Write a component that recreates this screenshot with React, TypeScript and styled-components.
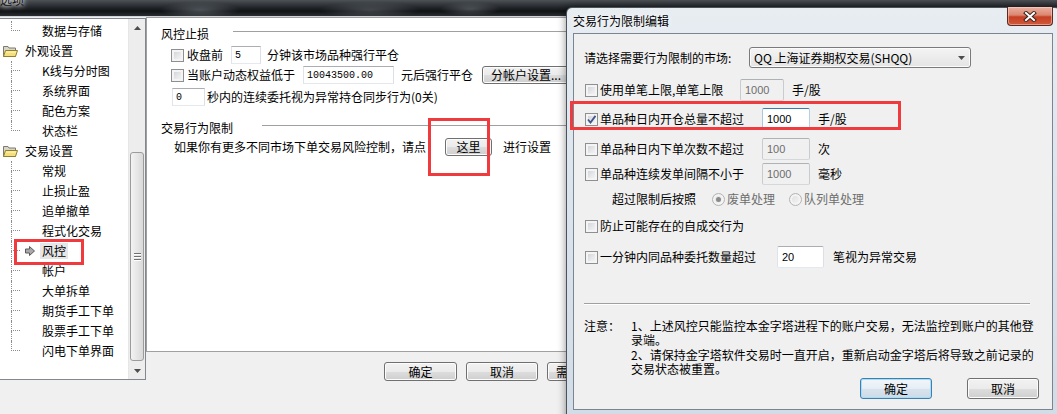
import * as React from "react";
import styled, { createGlobalStyle } from "styled-components";

const cjk = `"Noto Sans CJK SC", "Noto Sans", sans-serif`;
const mono = `"Liberation Mono", "DejaVu Sans Mono", monospace`;
const sans = `"Liberation Sans", "DejaVu Sans", sans-serif`;

const GlobalStyle = createGlobalStyle`
    html, body {
        margin: 0;
        padding: 0;
        background: #f0f0f0;
    }
    body {
        font-family: ${cjk};
    }
    * {
        box-sizing: border-box;
    }
`;

const Root = styled.div`
    position: relative;

    width: 1057px;
    height: 414px;
    overflow: hidden;

    background: #f0f0f0;
    color: #000;
    font: 12px/16px ${cjk};
`;

/* ---------- background window ---------- */

const MainWindow = styled.div`
    display: flex;
    flex-direction: column;
`;

const TitleBar = styled.div`
    display: flex;
    align-items: flex-start;

    height: 17px;
    overflow: hidden;

    border-bottom: 1px solid #cfd4d9;
    background: radial-gradient(ellipse 40px 8px at 200px 10px, rgba(140, 150, 160, 0.45), transparent),
        radial-gradient(ellipse 50px 8px at 370px 10px, rgba(150, 160, 170, 0.35), transparent),
        radial-gradient(ellipse 30px 7px at 470px 9px, rgba(160, 170, 180, 0.35), transparent),
        linear-gradient(180deg, #4d5257 0%, #24272b 45%, #101214 70%, #2b2f33 100%);
`;

const WinTitle = styled.span`
    margin-top: -7px;
    font-size: 12px;
    line-height: 14px;
    color: #111;
    text-shadow: 0 0 4px #fff, 0 0 6px #fff;
`;

const Body = styled.div`
    display: flex;
    height: 364px;
`;

const TreePanel = styled.div`
    display: flex;

    width: 146px;
    height: 362px;
    margin-top: 1px;

    border: 1px solid #828790;
    border-left: none;
    background: #fff;
`;

const TreeList = styled.div`
    flex: 1;
    padding-top: 2px;
`;

const TreeRow = styled.div`
    display: flex;
    align-items: center;

    height: 20px;
    white-space: nowrap;
`;

const Connector = styled.div`
    display: flex;
    flex-direction: column;
    align-self: stretch;

    width: 9px;
    margin-left: 11px;
`;

const ConnTop = styled.div`
    height: 10px;
    border-left: 1px dotted #8c8c8c;
    border-bottom: 1px dotted #8c8c8c;
`;

const ConnBottom = styled.div<{ $last?: boolean }>`
    flex: 1;
    border-left: ${p => (p.$last ? "none" : "1px dotted #8c8c8c")};
`;

const IconSlot = styled.span`
    display: flex;
    align-items: center;

    width: 20px;
    padding-left: 5px;
`;

const TreeLabel = styled.span<{ $active?: boolean }>`
    padding: 0 2px;
    line-height: 16px;
    background: ${p => (p.$active ? "#e6e6e6" : "transparent")};
`;

const FolderWrap = styled.span`
    display: flex;
    width: 23px;
    padding-left: 3px;
`;

const Scrollbar = styled.div`
    display: flex;
    flex-direction: column;

    width: 17px;
    border-left: 1px solid #e6e6e6;
    background: #ededed;
`;

const ScrollArrow = styled.div`
    display: flex;
    align-items: center;
    justify-content: center;

    height: 17px;
`;

const ScrollGap = styled.div<{ $h?: number }>`
    height: ${p => (p.$h ? `${p.$h}px` : "auto")};
    flex: ${p => (p.$h ? "none" : 1)};
`;

const Thumb = styled.div`
    display: flex;
    flex-direction: column;
    align-items: center;
    justify-content: center;
    gap: 2px;

    height: 209px;
    margin: 0 1px;

    border: 1px solid #9b9b9b;
    border-radius: 3px;
    background: linear-gradient(90deg, #f3f3f3 0%, #e6e6e6 50%, #d9d9d9 100%);
`;

const Grip = styled.span`
    width: 7px;
    height: 1px;
    background: #707070;
    box-shadow: 0 1px 0 #fff;
`;

const SettingsCol = styled.div`
    display: flex;
    flex: 1;
    flex-direction: column;
`;

const SettingsPanel = styled.div`
    height: 364px;
    padding: 8px 0 0 14px;

    border: 1px solid #a0a0a0;
    background: #fff;
`;

const GroupTitle = styled.div<{ $mt?: number }>`
    display: flex;
    align-items: flex-start;

    height: 16px;
    margin-top: ${p => p.$mt || 0}px;
`;

const Caption = styled.span<{ $w: number }>`
    width: ${p => p.$w}px;
    line-height: 16px;
`;

const Rule = styled.span`
    flex: 1;
    height: 1px;
    margin-top: 5px;
    background: #a0a0a0;
`;

const Row = styled.div<{ $mt?: number; $ml?: number; $h?: number }>`
    display: flex;
    align-items: center;

    height: ${p => p.$h || 18}px;
    margin-top: ${p => p.$mt || 0}px;
    margin-left: ${p => p.$ml || 0}px;

    white-space: nowrap;
`;

const Text = styled.span<{ $w?: number; $ml?: number; $muted?: boolean }>`
    flex: none;
    width: ${p => (p.$w ? `${p.$w}px` : "auto")};
    margin-left: ${p => p.$ml || 0}px;
    color: ${p => (p.$muted ? "#6d6d6d" : "#000")};
    line-height: 16px;
`;

const Check = styled.span<{ $ml?: number }>`
    display: flex;
    flex: none;
    align-items: center;
    justify-content: center;

    width: 13px;
    height: 13px;
    margin-left: ${p => p.$ml || 0}px;
    margin-right: 2px;

    border: 1px solid #8e8f8f;
    background: linear-gradient(135deg, #c9cdd3 0%, #e9eaec 60%, #f7f7f7 100%);
    box-shadow: inset 0 0 0 2px #f4f4f4;
`;

const Radio = styled.span<{ $on?: boolean }>`
    display: flex;
    flex: none;
    align-items: center;
    justify-content: center;

    width: 13px;
    height: 13px;
    margin-right: 2px;

    border: 1px solid #b4b4b4;
    border-radius: 50%;
    background: linear-gradient(135deg, #dcdcdc, #f8f8f8);
    box-shadow: inset 0 0 0 2px #f4f4f4;

    &::after {
        content: "";
        width: 5px;
        height: 5px;
        border-radius: 50%;
        background: ${p => (p.$on ? "#8a8a8a" : "transparent")};
    }
`;

const BgInput = styled.input<{ $w: number }>`
    flex: none;
    width: ${p => p.$w}px;
    height: 18px;
    padding: 0 0 0 3px;

    border: 1px solid;
    border-color: #abadb3 #dbdfe6 #e3e9ef #e2e3ea;
    background: #fff;
    color: #000;
    font: 10px/16px ${mono};
    outline: none;
`;

const WinButton = styled.button<{ $w: number; $h?: number; $ml?: number; $focus?: boolean; $align?: string }>`
    display: flex;
    flex: none;
    align-items: center;
    justify-content: ${p => p.$align || "center"};

    width: ${p => p.$w}px;
    height: ${p => p.$h || 19}px;
    margin-left: ${p => p.$ml || 0}px;
    padding: 0 ${p => (p.$align ? 8 : 0)}px;

    border: 1px solid ${p => (p.$focus ? "#3c7fb1" : "#707070")};
    border-radius: 3px;
    background: ${p =>
        p.$focus
            ? "linear-gradient(180deg, #f1f6fa 0%, #e6eef5 50%, #d8e3ed 51%, #cddbe7 100%)"
            : "linear-gradient(180deg, #f2f2f2 0%, #ebebeb 50%, #dddddd 51%, #cfcfcf 100%)"};
    box-shadow: inset 0 0 0 1px ${p => (p.$focus ? "#a9dcf5" : "#fcfcfc")};

    color: #000;
    font: 12px/16px ${cjk};
    white-space: nowrap;
    overflow: hidden;
`;

const ButtonBar = styled.div`
    display: flex;
    gap: 9px;
    padding: 10px 0 0 238px;
`;

/* ---------- dialog ---------- */

const Dialog = styled.div`
    position: absolute;
    top: 7px;
    left: 566px;

    display: flex;
    flex-direction: column;

    width: 495px;
    height: 420px;

    border: 1px solid #4a525c;
    border-radius: 6px 6px 0 0;
    background: linear-gradient(180deg, #e8edf2 0%, #dde5ed 35%, #d2dce6 100%);
    box-shadow: 0 0 8px rgba(0, 0, 0, 0.45);
`;

const DialogTitleRow = styled.div`
    display: flex;
    align-items: center;
    justify-content: space-between;

    height: 25px;
    padding-left: 6px;
`;

const DialogTitle = styled.span`
    font-size: 12px;
    line-height: 16px;
    text-shadow: 0 0 6px #fff;
`;

const CloseButton = styled.div`
    display: flex;
    align-items: center;
    justify-content: center;
    align-self: flex-start;

    width: 46px;
    height: 19px;
    margin-top: -1px;
    margin-right: 7px;

    border: 1px solid #5a2a22;
    border-top: none;
    border-radius: 0 0 4px 4px;
    background: linear-gradient(180deg, #eab0a2 0%, #dc8670 45%, #c53f24 55%, #d25a3c 100%);
    box-shadow: inset 0 0 0 1px rgba(255, 220, 210, 0.5);
`;

const Client = styled.div`
    display: flex;
    flex-direction: column;

    height: 377px;
    margin: 0 7px 0 6px;
    padding: 0 13px 0 10px;

    border: 1px solid #7a8591;
    background: #f0f0f0;
`;

const Select = styled.div`
    display: flex;
    flex: none;
    align-items: center;
    justify-content: space-between;

    width: 222px;
    height: 21px;
    padding: 0 5px 0 4px;

    border: 1px solid #7a7a7a;
    border-radius: 3px;
    background: linear-gradient(180deg, #f4f4f4 0%, #ececec 50%, #e4e4e4 100%);
    box-shadow: inset 0 0 0 1px #fbfbfb;

    font-size: 12px;
`;

const DlgInput = styled.input<{ $w: number; $state: "off" | "on" | "focus" }>`
    flex: none;
    width: ${p => p.$w}px;
    height: 22px;
    padding: 0 0 0 4px;

    border: 1px solid;
    border-radius: 2px;
    border-color: ${p =>
        p.$state === "focus"
            ? "#3d7bad #b5cfe7 #b7d9ed #a4c9e3"
            : p.$state === "on"
            ? "#abadb3 #dbdfe6 #e3e9ef #e2e3ea"
            : "#adb2b5 #c9cccf #d5d8db #c9cccf"};
    background: ${p => (p.$state === "off" ? "#f0f0f0" : "#fff")};
    color: ${p => (p.$state === "off" ? "#6d6d6d" : "#000")};
    font: 11px/18px ${sans};
    outline: none;
`;

const Separator = styled.div`
    width: 446px;
    height: 2px;
    margin-top: 35px;

    border-top: 1px solid #a0a0a0;
    border-bottom: 1px solid #fff;
`;

const Notes = styled.div`
    display: flex;
    margin-top: 14px;
`;

const NoteHead = styled.span`
    flex: none;
    width: 47px;
    line-height: 14px;
`;

const NoteList = styled.div`
    display: flex;
    flex-direction: column;
    gap: 1px;
`;

const NoteItem = styled.div`
    line-height: 14px;
    white-space: nowrap;
`;

const DialogButtons = styled.div`
    display: flex;
    justify-content: flex-end;
    gap: 35px;
    margin-top: 2px;
`;

const RedBox = styled.div<{ $x: number; $y: number; $w: number; $h: number }>`
    position: absolute;
    top: ${p => p.$y}px;
    left: ${p => p.$x}px;

    width: ${p => p.$w}px;
    height: ${p => p.$h}px;

    border: 3px solid #ef3a3e;
    pointer-events: none;
`;

/* ---------- icons ---------- */

const Folder = () => (
    <svg width="15" height="12" viewBox="0 0 15 12">
        <path d="M0.5 1.5 H5 L6 3 H12.5 V11.5 H0.5 Z" fill="#d9d6c8" stroke="#7d7a6a" />
        <path d="M0.5 11.5 L2.5 5.5 H14.5 L12.5 11.5 Z" fill="#f4e07a" stroke="#8f7f35" />
        <path d="M3 7 H13" stroke="#fff6c2" />
    </svg>
);

const ArrowIcon = () => (
    <svg width="10" height="10" viewBox="0 0 10 10">
        <path d="M0.5 3 H4.5 V0.5 L9.5 5 L4.5 9.5 V7 H0.5 Z" fill="#a8a8a8" stroke="#5a5a5a" />
    </svg>
);

const Tick = () => (
    <svg width="9" height="9" viewBox="0 0 9 9">
        <path d="M1 4.5 L3.5 7.5 L8.5 0.8" fill="none" stroke="#40558a" strokeWidth="1.8" />
    </svg>
);

const Tri = ({ up }: { up?: boolean }) => (
    <svg width="7" height="4" viewBox="0 0 7 4">
        <path d={up ? "M0 4 L3.5 0 L7 4 Z" : "M0 0 L3.5 4 L7 0 Z"} fill="#4d4d4d" />
    </svg>
);

const CloseX = () => (
    <svg width="14" height="11" viewBox="0 0 14 11">
        <path d="M3 2 L11 9 M11 2 L3 9" stroke="#3a2420" strokeWidth="4" strokeLinecap="square" />
        <path d="M3 2 L11 9 M11 2 L3 9" stroke="#fff" strokeWidth="2" strokeLinecap="square" />
    </svg>
);

/* ---------- data ---------- */

type Node = { text: string; folder?: boolean; last?: boolean; active?: boolean };

const tree: Node[] = [
    { text: "数据与存储", last: true },
    { text: "外观设置", folder: true },
    { text: "K线与分时图" },
    { text: "系统界面" },
    { text: "配色方案" },
    { text: "状态栏", last: true },
    { text: "交易设置", folder: true },
    { text: "常规" },
    { text: "止损止盈" },
    { text: "追单撤单" },
    { text: "程式化交易" },
    { text: "风控", active: true },
    { text: "帐户" },
    { text: "大单拆单" },
    { text: "期货手工下单" },
    { text: "股票手工下单" },
    { text: "闪电下单界面", last: true }
];

const TreeItem = ({ node }: { node: Node }) =>
    node.folder ? (
        <TreeRow>
            <FolderWrap>
                <Folder />
            </FolderWrap>
            <TreeLabel>{node.text}</TreeLabel>
        </TreeRow>
    ) : (
        <TreeRow>
            <Connector>
                <ConnTop />
                <ConnBottom $last={node.last} />
            </Connector>
            <IconSlot>{node.active && <ArrowIcon />}</IconSlot>
            <TreeLabel $active={node.active}>{node.text}</TreeLabel>
        </TreeRow>
    );

export default function App() {
    return (
        <Root>
            <GlobalStyle />
            <MainWindow>
                <TitleBar>
                    <WinTitle>选项</WinTitle>
                </TitleBar>
                <Body>
                    <TreePanel>
                        <TreeList>
                            {tree.map(n => (
                                <TreeItem key={n.text} node={n} />
                            ))}
                        </TreeList>
                        <Scrollbar>
                            <ScrollArrow>
                                <Tri up />
                            </ScrollArrow>
                            <ScrollGap $h={116} />
                            <Thumb>
                                <Grip />
                                <Grip />
                                <Grip />
                            </Thumb>
                            <ScrollGap />
                            <ScrollArrow>
                                <Tri />
                            </ScrollArrow>
                        </Scrollbar>
                    </TreePanel>
                    <SettingsCol>
                        <SettingsPanel>
                            <GroupTitle>
                                <Caption $w={72}>风控止损</Caption>
                                <Rule />
                            </GroupTitle>
                            <Row $mt={4} $ml={10}>
                                <Check />
                                <Text $ml={1} $w={44}>收盘前</Text>
                                <BgInput $w={30} defaultValue="5" readOnly />
                                <Text $ml={6}>分钟该市场品种强行平仓</Text>
                            </Row>
                            <Row $mt={2} $ml={10}>
                                <Check />
                                <Text $ml={1} $w={116}>当账户动态权益低于</Text>
                                <BgInput $w={91} defaultValue="10043500.00" readOnly />
                                <Text $ml={7}>元后强行平仓</Text>
                                <WinButton $w={100} $h={18} $ml={9} $align="flex-start">
                                    分帐户设置...
                                </WinButton>
                            </Row>
                            <Row $mt={4} $ml={11}>
                                <BgInput $w={33} defaultValue="0" readOnly />
                                <Text $ml={2}>秒内的连续委托视为异常持仓同步行为(0关)</Text>
                            </Row>
                            <GroupTitle $mt={14}>
                                <Caption $w={101}>交易行为限制</Caption>
                                <Rule />
                            </GroupTitle>
                            <Row $mt={2} $ml={13}>
                                <Text $w={271}>如果你有更多不同市场下单交易风险控制，请点</Text>
                                <WinButton $w={47} $h={18}>
                                    这里
                                </WinButton>
                                <Text $ml={11}>进行设置</Text>
                            </Row>
                        </SettingsPanel>
                        <ButtonBar>
                            <WinButton $w={73}>确定</WinButton>
                            <WinButton $w={72}>取消</WinButton>
                            <WinButton $w={72} $align="flex-start">
                                需要帮助
                            </WinButton>
                        </ButtonBar>
                    </SettingsCol>
                </Body>
            </MainWindow>

            <RedBox $x={14} $y={239} $w={70} $h={26} />
            <RedBox $x={428} $y={118} $w={62} $h={58} />

            <Dialog>
                <DialogTitleRow>
                    <DialogTitle>交易行为限制编辑</DialogTitle>
                    <CloseButton>
                        <CloseX />
                    </CloseButton>
                </DialogTitleRow>
                <Client>
                    <Row $mt={13} $h={21}>
                        <Text $w={165}>请选择需要行为限制的市场:</Text>
                        <Select>
                            <span>QQ 上海证券期权交易(SHQQ)</span>
                            <Tri />
                        </Select>
                    </Row>
                    <Row $mt={11} $h={22} $ml={1}>
                        <Check />
                        <Text $w={140}>使用单笔上限,单笔上限</Text>
                        <DlgInput $w={44} $state="off" defaultValue="1000" readOnly />
                        <Text $ml={8}>手/股</Text>
                    </Row>
                    <Row $mt={7} $h={22} $ml={1}>
                        <Check>
                            <Tick />
                        </Check>
                        <Text $w={162}>单品种日内开仓总量不超过</Text>
                        <DlgInput $w={48} $state="focus" defaultValue="1000" readOnly />
                        <Text $ml={8}>手/股</Text>
                    </Row>
                    <Row $mt={8} $h={22} $ml={1}>
                        <Check />
                        <Text $w={162}>单品种日内下单次数不超过</Text>
                        <DlgInput $w={48} $state="off" defaultValue="100" readOnly />
                        <Text $ml={8}>次</Text>
                    </Row>
                    <Row $mt={3} $h={22} $ml={1}>
                        <Check />
                        <Text $w={162}>单品种连续发单间隔不小于</Text>
                        <DlgInput $w={48} $state="off" defaultValue="1000" readOnly />
                        <Text $ml={8}>毫秒</Text>
                    </Row>
                    <Row $mt={7} $h={14} $ml={28}>
                        <Text $w={100}>超过限制后按照</Text>
                        <Radio $on />
                        <Text $w={62} $muted>
                            废单处理
                        </Text>
                        <Radio />
                        <Text $muted>队列单处理</Text>
                    </Row>
                    <Row $mt={12} $h={16} $ml={1}>
                        <Check />
                        <Text>防止可能存在的自成交行为</Text>
                    </Row>
                    <Row $mt={12} $h={22} $ml={1}>
                        <Check />
                        <Text $w={177}>一分钟内同品种委托数量超过</Text>
                        <DlgInput $w={47} $state="on" defaultValue="20" readOnly />
                        <Text $ml={9}>笔视为异常交易</Text>
                    </Row>
                    <Separator />
                    <Notes>
                        <NoteHead>注意：</NoteHead>
                        <NoteList>
                            <div>
                                <NoteItem>1、上述风控只能监控本金字塔进程下的账户交易，无法监控到账户的其他登</NoteItem>
                                <NoteItem>录端。</NoteItem>
                            </div>
                            <div>
                                <NoteItem>2、请保持金字塔软件交易时一直开启，重新启动金字塔后将导致之前记录的</NoteItem>
                                <NoteItem>交易状态被重置。</NoteItem>
                            </div>
                        </NoteList>
                    </Notes>
                    <DialogButtons>
                        <WinButton $w={72} $h={21} $focus>
                            确定
                        </WinButton>
                        <WinButton $w={72} $h={21}>
                            取消
                        </WinButton>
                    </DialogButtons>
                </Client>
            </Dialog>

            <RedBox $x={570} $y={101} $w={331} $h={29} />
        </Root>
    );
}
